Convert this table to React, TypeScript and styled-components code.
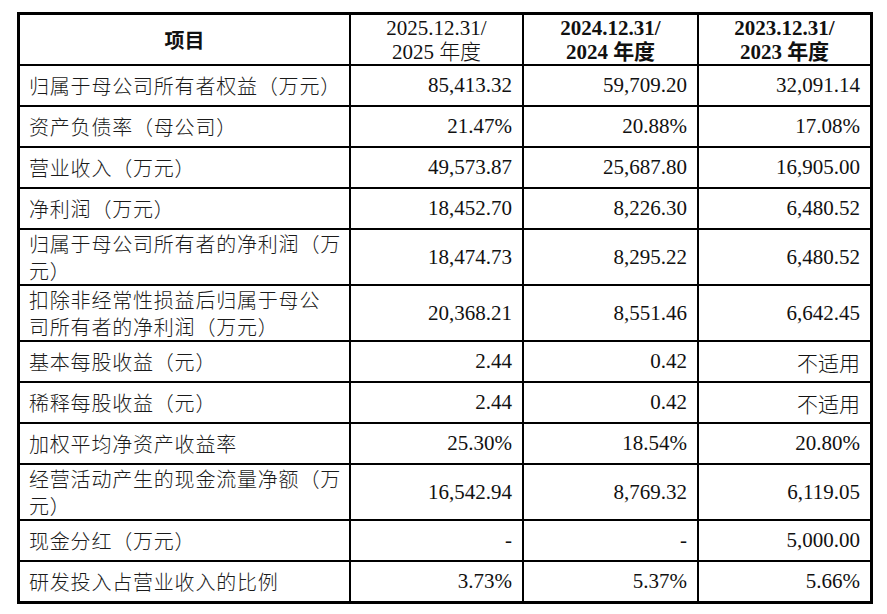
import React from 'react'
import styled, { createGlobalStyle } from 'styled-components'

const GlobalStyle = createGlobalStyle`
  html, body {
    margin: 0;
    padding: 0;
    background: #ffffff;
  }
`

const Page = styled.div`
  width: 887px;
  height: 614px;
  padding: 12px 0 0 17px;
  box-sizing: border-box;
  background: #ffffff;
`

const Grid = styled.div`
  display: inline-grid;
  grid-template-columns: 329px 171px 173px 171px;
  gap: 2px;
  padding: 3px;
  background: #000000;
  text-spacing-trim: space-all;
`

const HeadCell = styled.div<{ $bold?: boolean }>`
  height: 49px;
  background: #ffffff;
  display: flex;
  align-items: center;
  justify-content: center;
  text-align: center;
  font-family: 'Liberation Serif', 'Noto Sans CJK SC', serif;
  font-size: 21px;
  line-height: 24px;
  font-weight: ${({ $bold }) => ($bold ? 700 : 300)};
  color: #111111;
`

const HeadTitle = styled.span`
  font-family: 'Noto Sans CJK SC', sans-serif;
  font-size: 20px;
  font-weight: 700;
`

const LabelCell = styled.div<{ $tall?: boolean }>`
  height: ${({ $tall }) => ($tall ? 54 : 39)}px;
  background: #ffffff;
  display: flex;
  align-items: center;
  padding-left: 9px;
  font-family: 'Noto Sans CJK SC', sans-serif;
  font-size: 20px;
  letter-spacing: 0.8px;
  font-weight: 300;
  line-height: 27px;
  color: #1a1a1a;
  white-space: nowrap;
`

const ValueCell = styled.div<{ $tall?: boolean }>`
  height: ${({ $tall }) => ($tall ? 54 : 39)}px;
  background: #ffffff;
  display: flex;
  align-items: center;
  justify-content: flex-end;
  padding-right: 10px;
  font-family: 'Liberation Serif', 'Noto Sans CJK SC', serif;
  font-size: 21px;
  font-weight: 300;
  color: #111111;
  white-space: nowrap;
`

interface RowData {
  label: string[]
  values: [string, string, string]
}

const rows: RowData[] = [
  { label: ['归属于母公司所有者权益（万元）'], values: ['85,413.32', '59,709.20', '32,091.14'] },
  { label: ['资产负债率（母公司）'], values: ['21.47%', '20.88%', '17.08%'] },
  { label: ['营业收入（万元）'], values: ['49,573.87', '25,687.80', '16,905.00'] },
  { label: ['净利润（万元）'], values: ['18,452.70', '8,226.30', '6,480.52'] },
  { label: ['归属于母公司所有者的净利润（万', '元）'], values: ['18,474.73', '8,295.22', '6,480.52'] },
  { label: ['扣除非经常性损益后归属于母公', '司所有者的净利润（万元）'], values: ['20,368.21', '8,551.46', '6,642.45'] },
  { label: ['基本每股收益（元）'], values: ['2.44', '0.42', '不适用'] },
  { label: ['稀释每股收益（元）'], values: ['2.44', '0.42', '不适用'] },
  { label: ['加权平均净资产收益率'], values: ['25.30%', '18.54%', '20.80%'] },
  { label: ['经营活动产生的现金流量净额（万', '元）'], values: ['16,542.94', '8,769.32', '6,119.05'] },
  { label: ['现金分红（万元）'], values: ['-', '-', '5,000.00'] },
  { label: ['研发投入占营业收入的比例'], values: ['3.73%', '5.37%', '5.66%'] },
]

const periods = [
  { date: '2025.12.31/', year: '2025 年度', bold: false },
  { date: '2024.12.31/', year: '2024 年度', bold: true },
  { date: '2023.12.31/', year: '2023 年度', bold: true },
]

const App: React.FC = () => {
  return (
    <Page>
      <GlobalStyle />
      <Grid>
        <HeadCell>
          <HeadTitle>项目</HeadTitle>
        </HeadCell>
        {periods.map((p) => (
          <HeadCell key={p.date} $bold={p.bold}>
            {p.date}
            <br />
            {p.year}
          </HeadCell>
        ))}

        {rows.map((row) => {
          const tall = row.label.length > 1
          return (
            <React.Fragment key={row.label.join('')}>
              <LabelCell $tall={tall}>
                <span>
                  {row.label.map((line, i) => (
                    <React.Fragment key={i}>
                      {i > 0 && <br />}
                      {line}
                    </React.Fragment>
                  ))}
                </span>
              </LabelCell>
              {row.values.map((v, i) => (
                <ValueCell key={i} $tall={tall}>
                  {v}
                </ValueCell>
              ))}
            </React.Fragment>
          )
        })}
      </Grid>
    </Page>
  )
}

export default App
